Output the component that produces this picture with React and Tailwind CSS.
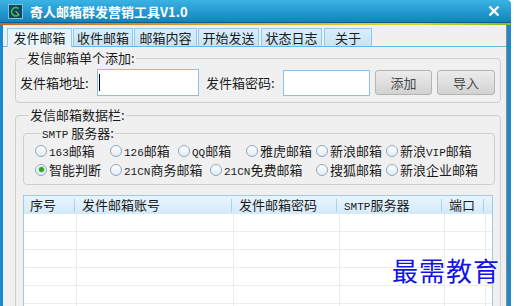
import React from "react";

const tabs = [
  { name: "发件邮箱", w: "w-[65px]", ml: "ml-0", active: true },
  { name: "收件邮箱", w: "w-[60px]", ml: "ml-[1px]" },
  { name: "邮箱内容", w: "w-[63px]", ml: "ml-[1px]" },
  { name: "开始发送", w: "w-[61px]", ml: "ml-[1px]" },
  { name: "状态日志", w: "w-[61px]", ml: "ml-[2px]" },
  { name: "关于", w: "w-[48px]", ml: "ml-[2px]" },
];

const rowOne = [
  { label: "163邮箱", w: "w-[75px]" },
  { label: "126邮箱", w: "w-[68px]" },
  { label: "QQ邮箱", w: "w-[68px]" },
  { label: "雅虎邮箱", w: "w-[70px]" },
  { label: "新浪邮箱", w: "w-[70px]" },
  { label: "新浪VIP邮箱", w: "" },
];

const rowTwo = [
  { label: "智能判断", w: "w-[75px]", checked: true },
  { label: "21CN商务邮箱", w: "w-[100px]" },
  { label: "21CN免费邮箱", w: "w-[106px]" },
  { label: "搜狐邮箱", w: "w-[70px]" },
  { label: "新浪企业邮箱", w: "" },
];

const columns = [
  { title: "序号", head: "w-[51px]", body: "w-[53px]" },
  { title: "发件邮箱账号", head: "w-[157px]", body: "w-[157px]" },
  { title: "发件邮箱密码", head: "w-[105px]", body: "w-[106px]" },
  { title: "SMTP服务器", head: "w-[105px]", body: "w-[105px]" },
  { title: "端口", head: "w-[42px]", body: "w-[41px]" },
];

// latin runs are drawn in a narrow mono face, like the old bitmap font
const Mixed = ({ text }) =>
  text.split(/([A-Za-z0-9]+)/).map((part, i) =>
    /^[A-Za-z0-9]+$/.test(part) ? (
      <span key={i} className="font-['Liberation_Mono',monospace] text-[11px] leading-none">
        {part}
      </span>
    ) : (
      <span key={i}>{part}</span>
    )
  );

const Radio = ({ label, w, checked }) => (
  <div className={`flex items-center gap-[2px] ${w}`}>
    <div className="w-[12px] h-[12px] rounded-full border border-[#8ea7c2] bg-gradient-to-b from-white to-[#e3ebf3] flex items-center justify-center shrink-0">
      {checked && <div className="w-[5px] h-[5px] rounded-full bg-[#2aa52a] ring-1 ring-[#bfe6bf]" />}
    </div>
    <span className="whitespace-nowrap leading-[16px]">
      <Mixed text={label} />
    </span>
  </div>
);

const App = () => {
  return (
    <div className="relative w-[514px] h-[306px] overflow-hidden bg-white text-[13px] text-[#1b1b1b] font-['Noto_Sans_CJK_SC',sans-serif]">
      <div className="w-[511px] h-full flex flex-col">
        {/* 标题栏 */}
        <div className="h-[22px] shrink-0 flex items-center rounded-tr-[4px] bg-gradient-to-b from-[#3ab3e3] to-[#0c84c0]">
          <svg width="15" height="15" viewBox="0 0 15 15" className="ml-[8px]">
            <rect x="0.5" y="0.5" width="14" height="14" fill="#0d4660" stroke="#7fc0dc" />
            <path d="M10.5 4.5 A4.2 4.2 0 1 0 11 10.5" fill="none" stroke="#49c04a" strokeWidth="1.6" />
            <path d="M7.5 7 L11 10.8" stroke="#c8e8a0" strokeWidth="1" />
          </svg>
          <span className="ml-[7px] text-white font-bold text-[13px] leading-none">
            奇人邮箱群发营销工具V1.0
          </span>
          <svg width="12" height="12" viewBox="0 0 12 12" className="ml-auto mr-[11px]">
            <path d="M1.5 1.5 L10.5 10.5 M10.5 1.5 L1.5 10.5" stroke="#fff" strokeWidth="2.4" />
          </svg>
        </div>
        <div className="h-px shrink-0 bg-[#0b5f8f]" />
        <div className="h-[2px] shrink-0 bg-gradient-to-r from-[#c8642f] via-[#e2d41e] via-80% to-[#7cc020]" />

        <div className="flex flex-1 min-h-0">
          <div className="w-[3px] bg-[#1a8ad0]" />
          <div className="flex-1 min-w-0 bg-[#f0f0f0] flex flex-col">
            {/* 选项卡 */}
            <div className="flex items-end pl-[4px] pt-[3px] border-b border-[#6ab6e6]">
              {tabs.map((t) => (
                <div
                  key={t.name}
                  className={`${t.w} ${t.ml} flex items-center justify-center border border-[#8ccaef] ${
                    t.active
                      ? "h-[19px] -mb-px border-b-0 bg-[#e9f5fc]"
                      : "h-[18px] border-b-0 bg-gradient-to-b from-[#d9effb] to-[#c4e4f7]"
                  }`}
                >
                  {t.name}
                </div>
              ))}
            </div>

            <div className="pl-[12px] pr-[5px] pt-[3px] flex flex-col">
              {/* 单个添加 */}
              <fieldset className="border border-[#cfcfcf] rounded-[4px] pl-[4px] pb-[6px]">
                <legend className="ml-[6px] px-px leading-[16px]">发信邮箱单个添加:</legend>
                <div className="flex items-center h-[27px] mt-[3px]">
                  <span className="w-[77px]">发件箱地址:</span>
                  <div className="w-[102px] h-[27px] border border-[#8cc2ea] bg-white flex items-center">
                    <div className="w-px h-[17px] bg-black ml-[1px]" />
                  </div>
                  <span className="ml-[7px] w-[77px]">发件箱密码:</span>
                  <div className="w-[87px] h-[26px] border border-[#8cc2ea] bg-white" />
                  <div className="ml-[5px] w-[57px] h-[25px] rounded-[3px] border border-[#b4b4b4] bg-gradient-to-b from-[#ececec] to-[#d2d2d2] flex items-center justify-center text-[#4a4a4a]">
                    添加
                  </div>
                  <div className="ml-[5px] w-[58px] h-[25px] rounded-[3px] border border-[#b4b4b4] bg-gradient-to-b from-[#ececec] to-[#d2d2d2] flex items-center justify-center text-[#4a4a4a]">
                    导入
                  </div>
                </div>
              </fieldset>

              {/* 数据栏 */}
              <fieldset className="mt-[4px] border border-[#cfcfcf] rounded-[4px] pl-[7px] pr-[5px] h-[220px]">
                <legend className="ml-[6px] px-px leading-[16px]">发信邮箱数据栏:</legend>
                <fieldset className="mt-[2px] border border-[#cfcfcf] rounded-[4px] pl-[11px] pb-[5px]">
                  <legend className="ml-[6px] px-px leading-[16px]">
                    <Mixed text="SMTP" /> 服务器:
                  </legend>
                  <div className="flex h-[19px] items-center">
                    {rowOne.map((r) => (
                      <Radio key={r.label} {...r} />
                    ))}
                  </div>
                  <div className="flex h-[19px] items-center">
                    {rowTwo.map((r) => (
                      <Radio key={r.label} {...r} />
                    ))}
                  </div>
                </fieldset>

                <div className="mt-[10px] mr-[2px] border border-[#9fcbea] bg-white">
                  <div className="flex h-[18px] items-center bg-gradient-to-b from-[#eaf5fd] to-[#d3eaf9]">
                    {columns.map((c, i) => (
                      <div key={c.title} className={`${c.head} h-full flex items-center justify-between`}>
                        <span className={`${i === 0 ? "pl-[6px]" : "pl-[7px]"} whitespace-nowrap leading-[16px]`}>
                          <Mixed text={c.title} />
                        </span>
                        <div className="w-px h-[13px] bg-[#a8d2ef]" />
                      </div>
                    ))}
                  </div>
                  {[0, 1, 2, 3, 4, 5].map((r) => (
                    <div key={r} className="flex h-[18px] border-b border-[#ececec]">
                      {columns.map((c) => (
                        <div key={c.title} className={`${c.body} border-r border-[#ececec]`} />
                      ))}
                    </div>
                  ))}
                </div>
              </fieldset>
            </div>
          </div>
          <div className="w-px bg-[#8a8a8a]" />
          <div className="w-[4px] bg-[#2088c8]" />
        </div>
      </div>

      {/* 水印 */}
      <div className="absolute left-[392px] top-[257px] text-[26px] leading-none tracking-[1px] text-[#1414e0] [text-shadow:0_0_2px_#fff,0_0_2px_#fff]">
        最需教育
      </div>
    </div>
  );
};

export default App;
